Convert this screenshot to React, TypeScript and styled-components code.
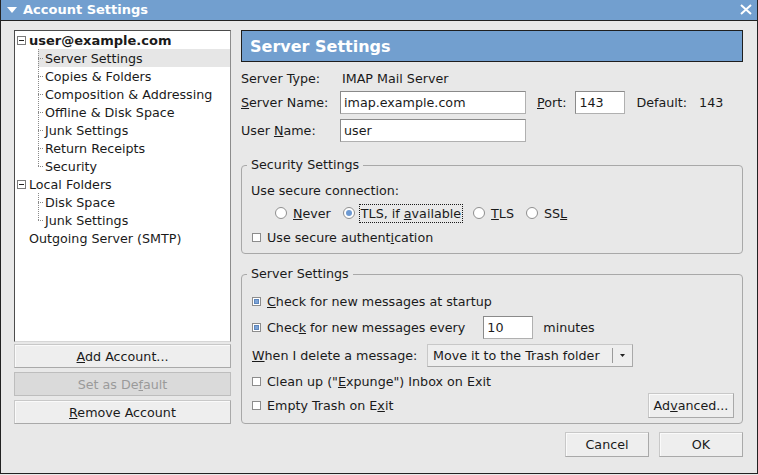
import styled, { createGlobalStyle } from "styled-components";

const GlobalStyle = createGlobalStyle`
  * { box-sizing: border-box; }
  html, body { margin: 0; padding: 0; background: #e8e8e8; }
  body {
    font-family: "DejaVu Sans", "Liberation Sans", sans-serif;
    font-size: 12.7px;
    color: #1a1a1a;
  }
`;

type TreeItem = {
  label: string;
  level: 0 | 1;
  bold?: boolean;
  expander?: boolean;
  selected?: boolean;
  last?: boolean;
};

const tree: TreeItem[] = [
  { label: "user@example.com", level: 0, bold: true, expander: true },
  { label: "Server Settings", level: 1, selected: true },
  { label: "Copies & Folders", level: 1 },
  { label: "Composition & Addressing", level: 1 },
  { label: "Offline & Disk Space", level: 1 },
  { label: "Junk Settings", level: 1 },
  { label: "Return Receipts", level: 1 },
  { label: "Security", level: 1, last: true },
  { label: "Local Folders", level: 0, expander: true },
  { label: "Disk Space", level: 1 },
  { label: "Junk Settings", level: 1, last: true },
  { label: "Outgoing Server (SMTP)", level: 0 },
];

export default function App() {
  return (
    <>
      <GlobalStyle />
      <Window>
        <TitleBar>
          <svg width="10" height="6" viewBox="0 0 10 6">
            <polygon points="0,0 10,0 5,6" fill="#fff" />
          </svg>
          <TitleText>Account Settings</TitleText>
          <svg width="12" height="11" viewBox="0 0 12 11">
            <path d="M1 1 L11 10 M11 1 L1 10" stroke="#fff" strokeWidth="2" />
          </svg>
        </TitleBar>

        <Content>
          <Body>
            <LeftPane>
              <Tree>
                {tree.map((item, i) => (
                  <TreeRow
                    key={i}
                    $indent={item.level === 1 ? 23 : item.expander ? 2 : 14}
                    $selected={item.selected}
                  >
                    {item.expander && (
                      <Expander>
                        <svg width="5" height="1" viewBox="0 0 5 1">
                          <rect width="5" height="1" fill="#222" />
                        </svg>
                      </Expander>
                    )}
                    {item.level === 1 && (
                      <svg width="6" height="18" viewBox="0 0 6 18">
                        <path
                          d={`M0.5 0 V${item.last ? 9 : 18} M0 9.5 H6`}
                          stroke="#8a8a8a"
                          strokeWidth="1"
                          strokeDasharray="1 1"
                          fill="none"
                        />
                      </svg>
                    )}
                    <TreeText $bold={item.bold} $child={item.level === 1}>
                      {item.label}
                    </TreeText>
                  </TreeRow>
                ))}
              </Tree>
              <SideButtons>
                <Button><u>A</u>dd Account...</Button>
                <Button disabled>Set as De<u>f</u>ault</Button>
                <Button><u>R</u>emove Account</Button>
              </SideButtons>
            </LeftPane>

            <RightPane>
              <PageHeader>Server Settings</PageHeader>

              <Fields>
                <FieldRow $h={19}>
                  <FieldLabel>Server Type:</FieldLabel>
                  <Value>IMAP Mail Server</Value>
                </FieldRow>
                <FieldRow $h={23}>
                  <FieldLabel><u>S</u>erver Name:</FieldLabel>
                  <TextInput $w={186} defaultValue="imap.example.com" readOnly />
                  <InlineLabel $gap={11}><u>P</u>ort:</InlineLabel>
                  <TextInput $w={50} $gap={9} defaultValue="143" readOnly />
                  <InlineLabel $gap={11}>Default:</InlineLabel>
                  <InlineLabel $gap={12}>143</InlineLabel>
                </FieldRow>
                <FieldRow $h={23}>
                  <FieldLabel>User <u>N</u>ame:</FieldLabel>
                  <TextInput $w={186} defaultValue="user" readOnly />
                </FieldRow>
              </Fields>

              <Group $top={15} $bottom={7}>
                <GroupTitle>Security Settings</GroupTitle>
                <GroupBody>
                  <OptionRow $h={18} $top={8}>Use secure connection:</OptionRow>
                  <RadioRow>
                    <RadioItem><Radio /><RadioText><u>N</u>ever</RadioText></RadioItem>
                    <RadioItem><Radio $on /><RadioText $focus>TLS, if <u>a</u>vailable</RadioText></RadioItem>
                    <RadioItem><Radio /><RadioText><u>T</u>LS</RadioText></RadioItem>
                    <RadioItem><Radio /><RadioText>SS<u>L</u></RadioText></RadioItem>
                  </RadioRow>
                  <OptionRow $h={18} $top={4}>
                    <CheckBox />
                    <CheckText>Use secure authent<u>i</u>cation</CheckText>
                  </OptionRow>
                </GroupBody>
              </Group>

              <Group $top={12} $bottom={5}>
                <GroupTitle>Server Settings</GroupTitle>
                <GroupBody>
                  <OptionRow $h={18} $top={10}>
                    <CheckBox $on />
                    <CheckText><u>C</u>heck for new messages at startup</CheckText>
                  </OptionRow>
                  <OptionRow $h={23} $top={6}>
                    <CheckBox $on />
                    <CheckText>Chec<u>k</u> for new messages every</CheckText>
                    <TextInput $w={50} $gap={18} defaultValue="10" readOnly />
                    <InlineLabel $gap={10}>minutes</InlineLabel>
                  </OptionRow>
                  <OptionRow $h={23} $top={5}>
                    <DeleteLabel><u>W</u>hen I delete a message:</DeleteLabel>
                    <Select>
                      <SelectText>Move it to the Trash folder</SelectText>
                      <SelectDivider />
                      <svg width="5" height="3" viewBox="0 0 5 3">
                        <polygon points="0,0 5,0 2.5,3" fill="#222" />
                      </svg>
                    </Select>
                  </OptionRow>
                  <OptionRow $h={18} $top={5}>
                    <CheckBox />
                    <CheckText>Clean up ("<u>E</u>xpunge") Inbox on Exit</CheckText>
                  </OptionRow>
                  <OptionRow $h={25} $top={3}>
                    <CheckBox />
                    <CheckText>Empty Trash on E<u>x</u>it</CheckText>
                    <AdvancedButton>Ad<u>v</u>anced...</AdvancedButton>
                  </OptionRow>
                </GroupBody>
              </Group>
            </RightPane>
          </Body>

          <Footer>
            <DialogButton>Cancel</DialogButton>
            <DialogButton>OK</DialogButton>
          </Footer>
        </Content>
      </Window>
    </>
  );
}

const Window = styled.div`
  width: 758px;
  height: 474px;
  display: flex;
  flex-direction: column;
  background: #e8e8e8;
  border: 1px solid #222;
  border-top: none;
`;

const TitleBar = styled.div`
  height: 21px;
  display: flex;
  align-items: center;
  padding: 0 5px 1px 6px;
  background: #729fcf;
  border-bottom: 1px solid #222;
`;

const TitleText = styled.span`
  flex: 1;
  margin-left: 6px;
  color: #fff;
  font-size: 13px;
  font-weight: 700;
`;

const Content = styled.div`
  flex: 1;
  display: flex;
  flex-direction: column;
  padding: 9px 14px 0 13px;
`;

const Body = styled.div`
  display: flex;
  gap: 10px;
`;

const LeftPane = styled.div`
  width: 217px;
  display: flex;
  flex-direction: column;
`;

const Tree = styled.div`
  height: 312px;
  background: #fff;
  border: 1px solid;
  border-color: #4c4c4c #8c8c8c #d6d6d6 #4c4c4c;
  display: flex;
  flex-direction: column;
`;

const TreeRow = styled.div<{ $indent: number; $selected?: boolean }>`
  height: 18px;
  display: flex;
  align-items: center;
  margin-left: ${(p) => p.$indent}px;
  background: ${(p) => (p.$selected ? "#e6e6e6" : "transparent")};
`;

const Expander = styled.span`
  width: 9px;
  height: 9px;
  flex: none;
  display: flex;
  align-items: center;
  justify-content: center;
  border: 1px solid #7a7a7a;
  background: #fff;
  margin-right: 3px;
`;

const TreeText = styled.span<{ $bold?: boolean; $child?: boolean }>`
  margin-left: ${(p) => (p.$child ? 1 : 0)}px;
  font-size: ${(p) => (p.$bold ? "13px" : "inherit")};
  font-weight: ${(p) => (p.$bold ? 700 : 400)};
  white-space: nowrap;
`;

const SideButtons = styled.div`
  display: flex;
  flex-direction: column;
  gap: 4px;
  margin-top: 2px;
`;

const Button = styled.button`
  height: 24px;
  padding: 0;
  margin: 0;
  font: inherit;
  color: #1a1a1a;
  background: #eeeeee;
  border: 1px solid;
  border-color: #c8c8c8 #a9a9a9 #a9a9a9 #c8c8c8;
  box-shadow: inset 1px 1px 0 #fafafa;

  &:disabled {
    color: #9a9a9a;
    background: #dadada;
    border-color: #bdbdbd;
    box-shadow: none;
  }
`;

const RightPane = styled.div`
  flex: 1;
  display: flex;
  flex-direction: column;
`;

const PageHeader = styled.div`
  height: 32px;
  display: flex;
  align-items: center;
  padding-left: 8px;
  background: #729fcf;
  border: 1px solid #1e1e1e;
  color: #fff;
  font-size: 16px;
  font-weight: 700;
`;

const Fields = styled.div`
  display: flex;
  flex-direction: column;
  gap: 4px;
  margin-top: 6px;

  & > :first-child {
    margin-top: 1px;
    margin-bottom: -1px;
  }

  & > :last-child {
    margin-top: 1px;
  }
`;

const FieldRow = styled.div<{ $h: number }>`
  height: ${(p) => p.$h}px;
  display: flex;
  align-items: center;
`;

const FieldLabel = styled.span`
  width: 99px;
  flex: none;
`;

const Value = styled.span`
  padding-left: 2px;
`;

const InlineLabel = styled.span<{ $gap: number }>`
  margin-left: ${(p) => p.$gap}px;
  white-space: nowrap;
`;

const TextInput = styled.input<{ $w: number; $gap?: number }>`
  width: ${(p) => p.$w}px;
  height: 23px;
  flex: none;
  margin: 0 0 0 ${(p) => p.$gap ?? 0}px;
  padding: 0 0 0 3px;
  font: inherit;
  color: inherit;
  background: #fff;
  border: 1px solid;
  border-color: #8a8a8a #b0b0b0 #b0b0b0 #8a8a8a;
  border-radius: 0;
  outline: none;
`;

const Group = styled.fieldset<{ $top: number; $bottom: number }>`
  margin: ${(p) => p.$top}px 0 0 0;
  padding: 0 8px ${(p) => p.$bottom}px 5px;
  min-width: 0;
  border: 1px solid #a8a8a8;
  border-radius: 4px;
`;

const GroupTitle = styled.legend`
  padding: 0 4px;
  line-height: 16px;
`;

const GroupBody = styled.div`
  display: flex;
  flex-direction: column;
  padding-left: 4px;
`;

const OptionRow = styled.div<{ $h: number; $top: number }>`
  height: ${(p) => p.$h}px;
  margin-top: ${(p) => p.$top}px;
  display: flex;
  align-items: center;
`;

const RadioRow = styled.div`
  height: 22px;
  margin-top: 3px;
  display: flex;
  align-items: center;
  gap: 10px;
  padding-left: 24px;
`;

const RadioItem = styled.span`
  display: flex;
  align-items: center;
`;

const Radio = styled.span<{ $on?: boolean }>`
  width: 12px;
  height: 12px;
  flex: none;
  display: flex;
  align-items: center;
  justify-content: center;
  border-radius: 50%;
  border: 1px solid #8f8f8f;
  background: #fff;

  &::after {
    content: "";
    width: 6px;
    height: 6px;
    border-radius: 50%;
    background: ${(p) => (p.$on ? "#6e9ad2" : "transparent")};
  }
`;

const RadioText = styled.span<{ $focus?: boolean }>`
  margin-left: 4px;
  padding: 1px 1px;
  border: 1px dotted ${(p) => (p.$focus ? "#1a1a1a" : "transparent")};
  white-space: nowrap;
`;

const CheckBox = styled.span<{ $on?: boolean }>`
  width: 9px;
  height: 9px;
  flex: none;
  margin-left: 1px;
  display: flex;
  align-items: center;
  justify-content: center;
  border: 1px solid #8c8c8c;
  background: #fff;

  &::after {
    content: "";
    width: 5px;
    height: 5px;
    background: ${(p) => (p.$on ? "#7ea4d6" : "transparent")};
    box-shadow: ${(p) => (p.$on ? "inset 0 0 0 1px #5d86bd" : "none")};
  }
`;

const CheckText = styled.span`
  margin-left: 6px;
  white-space: nowrap;
`;

const DeleteLabel = styled.span`
  width: 176px;
  flex: none;
  padding-left: 1px;
`;

const Select = styled.div`
  width: 206px;
  height: 23px;
  display: flex;
  align-items: center;
  padding: 0 7px 0 5px;
  background: #eeeeee;
  border: 1px solid;
  border-color: #c8c8c8 #a9a9a9 #a9a9a9 #c8c8c8;
`;

const SelectText = styled.span`
  flex: 1;
  white-space: nowrap;
`;

const SelectDivider = styled.span`
  width: 1px;
  height: 15px;
  margin-right: 7px;
  background: #9a9a9a;
`;

const AdvancedButton = styled(Button)`
  width: 86px;
  height: 25px;
  margin-left: auto;
`;

const Footer = styled.div`
  display: flex;
  justify-content: flex-end;
  gap: 10px;
  margin-top: 8px;
`;

const DialogButton = styled(Button)`
  width: 84px;
  height: 25px;
`;
